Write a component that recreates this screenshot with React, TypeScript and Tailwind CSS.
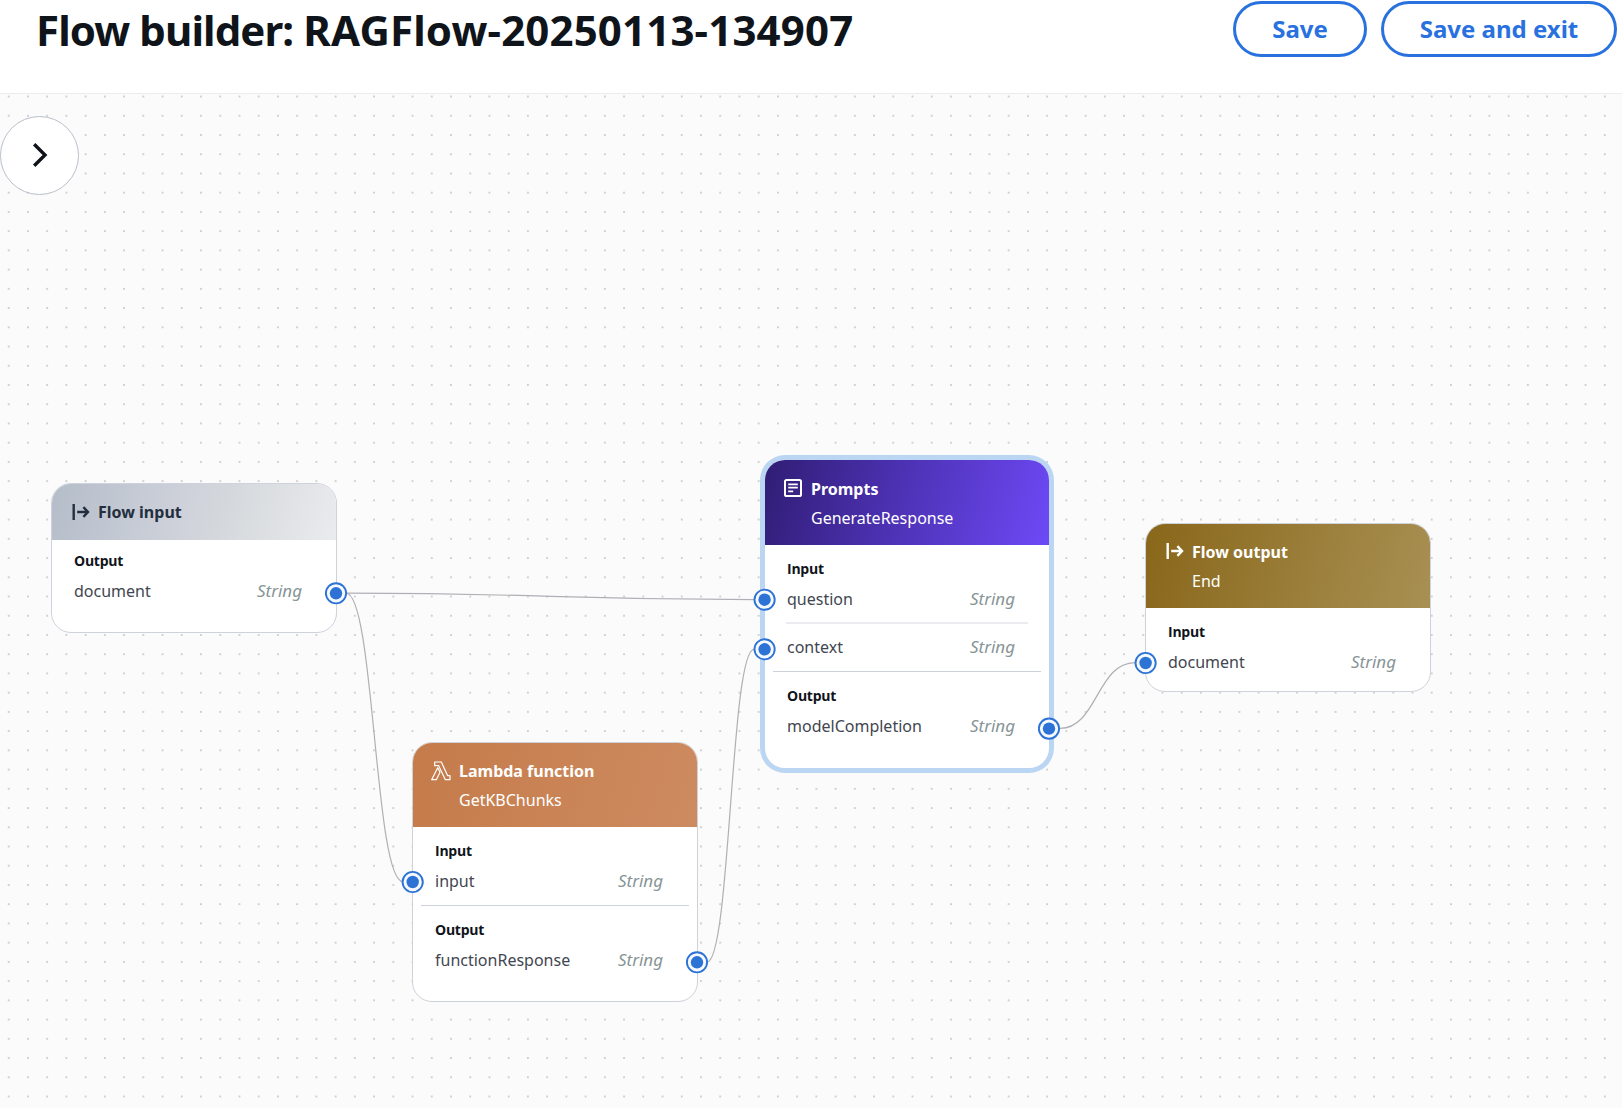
import type { ReactNode } from "react";

const FlowIcon = () => (
  <svg width="18" height="18" viewBox="0 0 18 18" fill="none" stroke="currentColor" strokeWidth="2.4">
    <path d="M1.7 1v16M5.2 9h10.6M11.4 4.2 16 9l-4.6 4.8" />
  </svg>
);

const LambdaIcon = () => (
  <svg width="20" height="20" viewBox="0 0 60 60" fill="none" stroke="currentColor" strokeWidth="3.6" strokeLinejoin="round">
    <path d="M11 3h20l19 41h7v12H43L23 14H11z" />
    <path d="M2 56 20 20l7 14-11 22z" />
  </svg>
);

const PromptIcon = () => (
  <svg width="18" height="18" viewBox="0 0 18 18" fill="none" stroke="currentColor" strokeWidth="2">
    <rect x="1" y="1" width="16" height="16" rx="1.6" />
    <path d="M4.2 5.4h9.6M4.2 8.6h9.6M4.2 12.4h5" strokeWidth="1.8" />
  </svg>
);

function Label({ children }: { children: ReactNode }) {
  return (
    <div className="h-5 pl-[22px] font-['Open_Sans',sans-serif] text-[14px] leading-5 font-bold tracking-[-0.25px] text-[#0f141a]">
      {children}
    </div>
  );
}

function Field({ name }: { name: string }) {
  return (
    <div className="flex h-7 items-center justify-between pr-[34px] pl-[22px] leading-7">
      <span className="text-[16px] text-[#424650]">{name}</span>
      <span className="text-[17px] text-[#879596] italic">String</span>
    </div>
  );
}

const Divider = () => <div className="mx-2 mt-[10px] mb-[14px] h-px shrink-0 bg-[#ced2db]" />;

interface NodeProps {
  place: string;
  header: string;
  icon: ReactNode;
  iconPlace: string;
  title: string;
  subtitle?: string;
  children: ReactNode;
}

function FlowNode({ place, header, icon, iconPlace, title, subtitle, children }: NodeProps) {
  return (
    <section className={`absolute flex flex-col overflow-hidden rounded-[20px] bg-white ${place}`}>
      <header className={`flex shrink-0 ${header}`}>
        <span className={`shrink-0 ${iconPlace}`}>{icon}</span>
        <div className="pt-[14px] text-[16px] leading-[29px]">
          <div className="font-bold">{title}</div>
          {subtitle && <div>{subtitle}</div>}
        </div>
      </header>
      {children}
    </section>
  );
}

const ports = [
  { x: 336, y: 593.3 },
  { x: 412.7, y: 882 },
  { x: 697, y: 962.3 },
  { x: 764.6, y: 599.7 },
  { x: 764.6, y: 649.3 },
  { x: 1049, y: 728.6 },
  { x: 1145.6, y: 663 },
];

const edges = [
  "M346 593.2C550 593.2 550 599.6 754 599.6",
  "M346 593.2C374.5 593.2 374.5 881.8 403 881.8",
  "M707 962C730.5 962 730.5 649.3 754 649.3",
  "M1060 728.4C1097 728.4 1097 662.6 1135 662.6",
];

export default function App() {
  return (
    <div className="flex h-[1108px] w-[1622px] flex-col overflow-hidden bg-white font-['Noto_Sans','Open_Sans',sans-serif]">
      <header className="flex h-[94px] shrink-0 items-start justify-between border-b border-[#ebebf0] pr-[5px] pl-9">
        <h1 className="text-[42px] leading-[60px] font-bold tracking-[0.16px] text-[#0f141a]">
          <span className="tracking-[-0.9px]">Flow builder: </span>RAGFlow-20250113-134907
        </h1>
        <div className="mt-px flex gap-[14px] text-[24px] font-bold text-[#2871de]">
          <button className="h-14 w-[134px] rounded-full border-3 border-[#2871de]">Save</button>
          <button className="h-14 w-[236px] rounded-full border-3 border-[#2871de]">Save and exit</button>
        </div>
      </header>

      <main className="relative flex-1 overflow-hidden bg-[#fbfbfb]">
        <svg className="absolute inset-0" width="1622" height="1014" viewBox="0 94 1622 1014" fill="none">
          <defs>
            <pattern id="dots" x="-0.9" y="86.9" width="19.23" height="19.23" patternUnits="userSpaceOnUse">
              <circle cx="9.6" cy="9.6" r="0.65" fill="#85858c" />
            </pattern>
          </defs>
          <rect y="94" width="1622" height="1014" fill="url(#dots)" />
          {edges.map((d) => (
            <path key={d} d={d} stroke="#afb0b5" strokeWidth="1.2" />
          ))}
        </svg>

        <button className="absolute top-[22px] left-0 grid size-[79px] place-items-center rounded-full border border-[#b9c0ca] bg-white">
          <svg width="25" height="25" viewBox="0 0 25 25" fill="none" stroke="#0f141a" strokeWidth="3.4">
            <path d="M7.200 1.200 18 12 7.200 22.800" />
          </svg>
        </button>

        <FlowNode
          place="left-[51px] top-[389px] h-[150px] w-[286px] border border-[#ced2db]"
          header="h-[56px] bg-linear-[105deg,#b4bdc9,#ced1da_45%,#d4d8dc_60%,#eaebed] text-[#232f3e]"
          icon={<FlowIcon />}
          iconPlace="mt-[19px] ml-[20px] mr-[8px]"
          title="Flow input"
        >
          <div className="h-[11px] shrink-0" />
          <Label>Output</Label>
          <div className="mt-[6px]" />
          <Field name="document" />
        </FlowNode>

        <FlowNode
          place="left-[412px] top-[648px] h-[260px] w-[286px] border border-[#ced2db]"
          header="h-[84px] bg-linear-[105deg,#c57b4a,#cd8b60] text-white"
          icon={<LambdaIcon />}
          iconPlace="mt-[18px] ml-[18px] mr-[8px]"
          title="Lambda function"
          subtitle="GetKBChunks"
        >
          <div className="h-[14px] shrink-0" />
          <Label>Input</Label>
          <div className="mt-[6px]" />
          <Field name="input" />
          <Divider />
          <Label>Output</Label>
          <div className="mt-[6px]" />
          <Field name="functionResponse" />
        </FlowNode>

        <FlowNode
          place="left-[765px] top-[366px] h-[308px] w-[284px] ring-5 ring-[#bbd6f3]"
          header="h-[85px] bg-linear-[105deg,#301d74,#4c31b2_45%,#6d49f6] pt-px text-white"
          icon={<PromptIcon />}
          iconPlace="mt-[18px] ml-[19px] mr-[9px]"
          title="Prompts"
          subtitle="GenerateResponse"
        >
          <div className="h-[14px] shrink-0" />
          <Label>Input</Label>
          <div className="mt-[6px]" />
          <Field name="question" />
          <div className="mx-[21px] mt-[9px] mb-[9px] h-[2px] shrink-0 bg-[#ebebf0]" />
          <Field name="context" />
          <Divider />
          <Label>Output</Label>
          <div className="mt-[6px]" />
          <Field name="modelCompletion" />
        </FlowNode>

        <FlowNode
          place="left-[1145px] top-[429px] h-[169px] w-[286px] border border-[#ced2db]"
          header="h-[84px] bg-linear-[105deg,#89671a,#a89053] text-white"
          icon={<FlowIcon />}
          iconPlace="mt-[18px] ml-[20px] mr-[8px]"
          title="Flow output"
          subtitle="End"
        >
          <div className="h-[14px] shrink-0" />
          <Label>Input</Label>
          <div className="mt-[6px]" />
          <Field name="document" />
        </FlowNode>

        <svg className="absolute inset-0" width="1622" height="1014" viewBox="0 94 1622 1014">
          {ports.map(({ x, y }) => (
            <g key={`${x}-${y}`}>
              <circle cx={x} cy={y} r="10.1" fill="#f6f9fe" stroke="#2c73d5" strokeWidth="1.9" />
              <circle cx={x} cy={y} r="6.2" fill="#2c73d5" />
            </g>
          ))}
        </svg>
      </main>
    </div>
  );
}
